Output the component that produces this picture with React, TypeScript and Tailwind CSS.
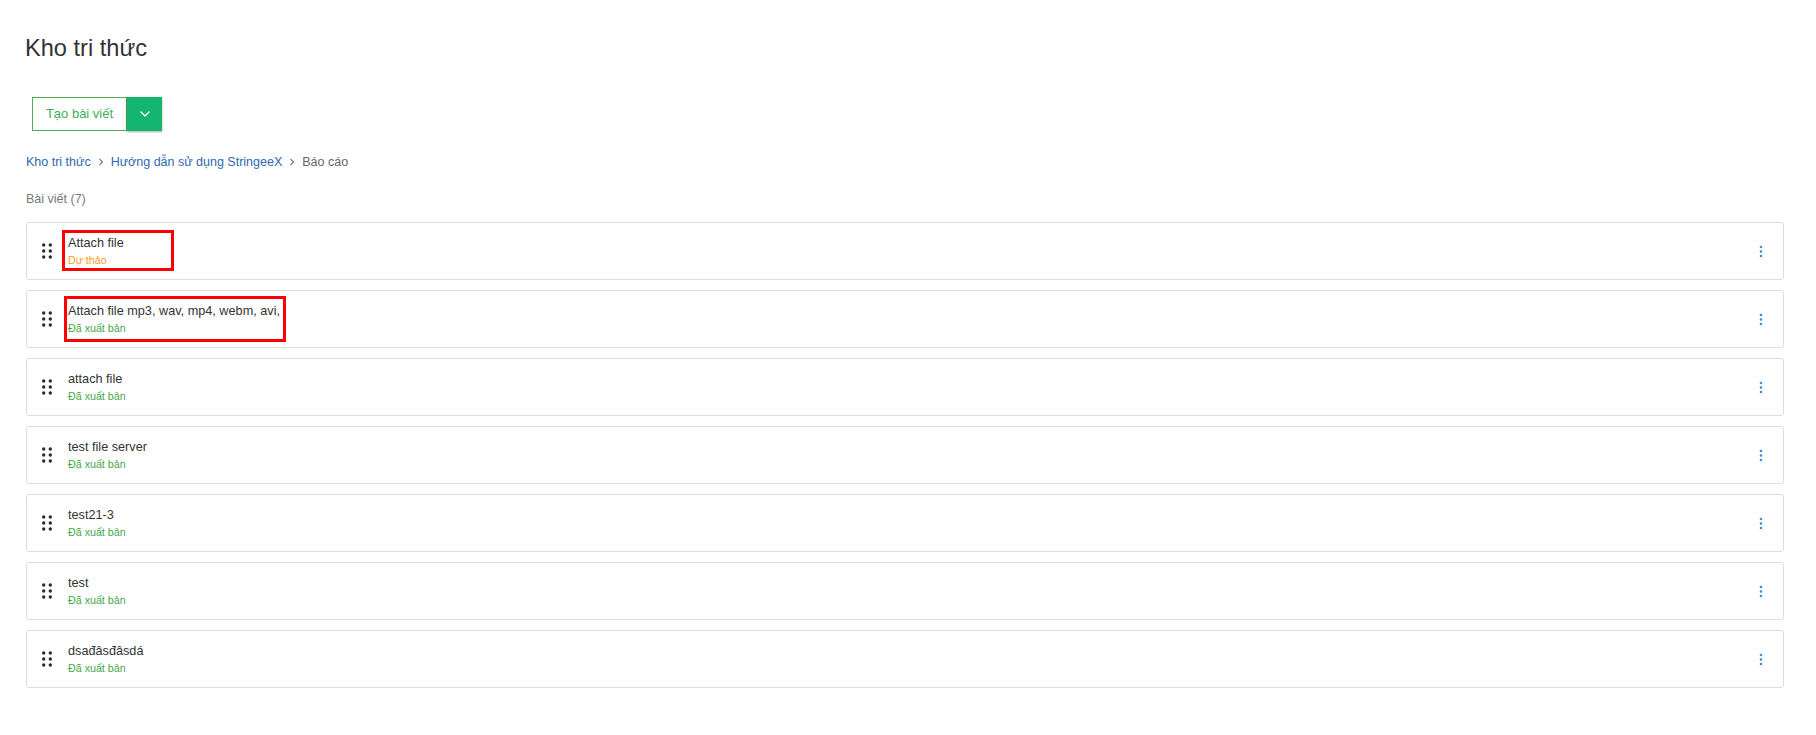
import { ChevronDown } from 'lucide-react'

type Article = {
  title: string
  draft?: boolean
  mark?: string
}

const articles: Article[] = [
  { title: 'Attach file', draft: true, mark: 'left-[-6px] top-[-4px] w-[112px] h-[41px]' },
  { title: 'Attach file mp3, wav, mp4, webm, avi,', mark: 'left-[-4px] top-[-6px] w-[222px] h-[46px]' },
  { title: 'attach file' },
  { title: 'test file server' },
  { title: 'test21-3' },
  { title: 'test' },
  { title: 'dsađâsđâsdá' },
]

function DragHandle() {
  return (
    <svg width="10" height="16" viewBox="0 0 10 16" className="shrink-0 text-[#2b2b2b]">
      {[2, 8, 14].map((y) => (
        <g key={y}>
          <circle cx="1.7" cy={y} r="1.7" fill="currentColor" />
          <circle cx="8.3" cy={y} r="1.7" fill="currentColor" />
        </g>
      ))}
    </svg>
  )
}

function Kebab() {
  return (
    <svg width="4" height="13" viewBox="0 0 4 13" className="text-[#3f8fcf]">
      <circle cx="2" cy="2" r="1.3" fill="currentColor" />
      <circle cx="2" cy="6.5" r="1.3" fill="currentColor" />
      <circle cx="2" cy="11" r="1.3" fill="currentColor" />
    </svg>
  )
}

function Sep() {
  return (
    <svg width="6" height="8" viewBox="0 0 6 8" className="mx-[7px] text-[#777]">
      <path d="M1.5 1 L4.5 4 L1.5 7" fill="none" stroke="currentColor" strokeWidth="1.1" />
    </svg>
  )
}

export default function App() {
  return (
    <div className="min-h-screen bg-white pl-[26px] pr-[32px] pt-[34px] font-['Liberation_Sans',Arial,sans-serif] text-[#333]">
      <h1 className="text-[23.6px] leading-[29px] -ml-px">Kho tri thức</h1>

      <div className="mt-[34px] ml-[6px] flex h-[34px]">
        <button className="w-[95px] border border-[#4caf50] bg-white text-[13px] text-[#3fae5a]">
          Tạo bài viết
        </button>
        <button className="flex w-[35px] items-center justify-center bg-[#14b66f] text-white shadow-[0_1px_2px_rgba(0,0,0,0.35)]">
          <ChevronDown size={16} strokeWidth={2} />
        </button>
      </div>

      <div className="mt-[22px] flex items-center text-[12.5px] leading-[18px]">
        <a className="text-[#2f67b1]">Kho tri thức</a>
        <Sep />
        <a className="text-[#2f67b1]">Hướng dẫn sử dụng StringeeX</a>
        <Sep />
        <span className="text-[#666]">Báo cáo</span>
      </div>

      <div className="mt-[19px] text-[12.5px] leading-[18px] text-[#777]">Bài viết (7)</div>

      <div className="mt-[14px] flex flex-col gap-[10px]">
        {articles.map((a) => (
          <div
            key={a.title}
            className="flex h-[58px] items-center rounded-[3px] border border-[#dedede] bg-white pl-[15px] pr-[20px]"
          >
            <DragHandle />
            <div className="relative ml-[16px] flex flex-col">
              <span className="text-[12.7px] leading-[18px] text-[#333]">{a.title}</span>
              <span
                className={
                  a.draft
                    ? 'text-[10.7px] leading-[16px] text-[#ff9a1a]'
                    : 'text-[10.7px] leading-[16px] text-[#45a84a]'
                }
              >
                {a.draft ? 'Dự thảo' : 'Đã xuất bản'}
              </span>
              {a.mark && (
                <span className={`pointer-events-none absolute border-[3px] border-[#ff0000] ${a.mark}`} />
              )}
            </div>
            <div className="ml-auto">
              <Kebab />
            </div>
          </div>
        ))}
      </div>
    </div>
  )
}
